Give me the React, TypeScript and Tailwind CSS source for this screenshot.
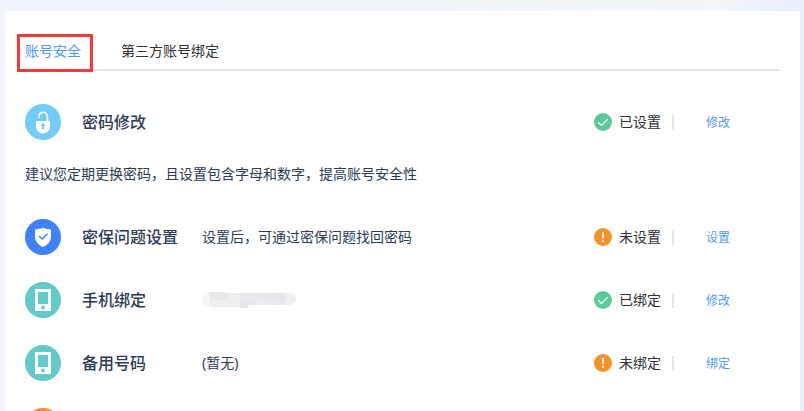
import { useState } from 'react';
import { clsx } from 'clsx';

type IconName = 'lock' | 'shield' | 'phone' | 'mail';

interface SecurityItem {
  id: string;
  icon: IconName;
  title?: string;
  detail?: string;
  masked?: boolean;
  hint?: string;
  done?: boolean;
  status?: string;
  action?: string;
}

const tabs = ['账号安全', '第三方账号绑定'];

const items: SecurityItem[] = [
  {
    id: 'password',
    icon: 'lock',
    title: '密码修改',
    hint: '建议您定期更换密码，且设置包含字母和数字，提高账号安全性',
    done: true,
    status: '已设置',
    action: '修改',
  },
  {
    id: 'question',
    icon: 'shield',
    title: '密保问题设置',
    detail: '设置后，可通过密保问题找回密码',
    done: false,
    status: '未设置',
    action: '设置',
  },
  { id: 'phone', icon: 'phone', title: '手机绑定', masked: true, done: true, status: '已绑定', action: '修改' },
  { id: 'backup', icon: 'phone', title: '备用号码', detail: '(暂无)', done: false, status: '未绑定', action: '绑定' },
  { id: 'mail', icon: 'mail' },
];

function ItemIcon({ name }: { name: IconName }) {
  return (
    <svg viewBox="0 0 36 36" className="size-9 shrink-0" aria-hidden="true">
      {name === 'lock' && (
        <>
          <circle cx="18" cy="18" r="18" fill="#73cbf8" />
          <path d="M14 13v-.5a4.200 4.200 0 0 1 8.400 0V18" fill="none" stroke="#fff" strokeWidth="1.800" strokeLinecap="round" />
          <path d="M11 17h14v5.500a7 7 0 0 1-14 0z" fill="#fff" />
          <path d="M18 19.300a1.900 1.900 0 0 1 .9 3.500v2.400h-1.800v-2.400a1.900 1.900 0 0 1 .9-3.500z" fill="#73cbf8" />
        </>
      )}
      {name === 'shield' && (
        <>
          <circle cx="18" cy="18" r="18" fill="#3e82fb" />
          <path d="M18 8.500C19.500 10 22 10 25 10.200L26 11V17.500C26 22.500 22.500 26 18 28C13.500 26 10 22.500 10 17.500V11L11 10.200C14 10 16.500 10 18 8.500Z" fill="#fff" />
          <path d="M14 17l3.200 3 5.300-5.300" fill="none" stroke="#3e82fb" strokeWidth="1.500" />
        </>
      )}
      {name === 'phone' && (
        <>
          <circle cx="18" cy="18" r="18" fill="#60cbc9" />
          <rect x="10" y="7" width="16" height="22" rx="0.5" fill="#fff" />
          <rect x="13" y="10" width="10" height="12" fill="#60cbc9" />
          <circle cx="18" cy="25.5" r="1.9" fill="#60cbc9" />
        </>
      )}
      {name === 'mail' && (
        <>
          <circle cx="18" cy="18" r="18" fill="#f59329" />
          <path d="M9 12h18v12H9z" fill="#fff" />
          <path d="M9 12l9 7 9-7" fill="none" stroke="#f59329" strokeWidth="1.5" />
        </>
      )}
    </svg>
  );
}

function StatusIcon({ done }: { done?: boolean }) {
  return (
    <svg viewBox="0 0 18 18" className="size-[18px] shrink-0" aria-hidden="true">
      <circle cx="9" cy="9" r="9" fill={done ? '#5cc99a' : '#f59329'} />
      {done ? (
        <path d="M4.2 9.200l3.300 3.200 6.300-6.300" fill="none" stroke="#fff" strokeWidth="1.2" />
      ) : (
        <>
          <path d="M8 4h2l-.3 6.500H8.300z" fill="#fff" />
          <rect x="8" y="12" width="2" height="2" fill="#fff" />
        </>
      )}
    </svg>
  );
}

// Mosaic drawn in place of the bound phone number
function MaskedNumber() {
  return (
    <svg viewBox="0 0 94 17" className="h-[17px] w-[94px]" role="img" aria-label="手机号已隐藏">
      <path d="M8 0H4Q0 3 0 8q0 5 3 7h5z" fill="#f5f5f6" />
      <path d="M8 0h13l1 1h4v7H8z" fill="#e8e8ea" />
      <path d="M8 8h30v7H8z" fill="#eeeef0" />
      <path d="M26 1h12v7H26z" fill="#ededef" />
      <path d="M38 1h15v7H38z" fill="#e9e9ed" />
      <path d="M38 8h15v5h-7v3h-8z" fill="#e6e6e9" />
      <path d="M53 1h15v7H53z" fill="#e8e8ec" />
      <path d="M53 8h15v5H53z" fill="#ebebee" />
      <path d="M68 1h15v7H68z" fill="#e5e5ea" />
      <path d="M68 8h15v5H68z" fill="#e9e9ed" />
      <path d="M83 1h6q5 2 5 6t-5 6h-6z" fill="#f0f0f3" />
    </svg>
  );
}

function SecurityRow({ item }: { item: SecurityItem }) {
  return (
    <li>
      <div className="flex h-9 items-center">
        <ItemIcon name={item.icon} />
        {item.title && (
          <>
            <h2 className="ml-[21px] w-[120px] shrink-0 text-base font-medium">{item.title}</h2>
            <div className="min-w-0 flex-1 text-sm">{item.masked ? <MaskedNumber /> : item.detail}</div>
            <StatusIcon done={item.done} />
            <span className="ml-[7px] text-sm text-[#303133]">{item.status}</span>
            <span className="ml-[11px] h-[15px] w-0.5 bg-[#e6e4e6]" />
            <button type="button" className="mr-[50px] ml-8 cursor-pointer pt-0.5 text-xs text-[#5199fa]">
              {item.action}
            </button>
          </>
        )}
      </div>
      {item.hint && <p className="mt-6 mb-2 text-sm leading-5">{item.hint}</p>}
    </li>
  );
}

export default function App() {
  const [activeTab, setActiveTab] = useState(tabs[0]);

  return (
    <div className="h-screen overflow-hidden bg-linear-to-r from-[#f1f5fb] via-[#f2f7fb] via-90% to-[#e8eefa] pt-[11px] pr-1 pl-[5px] font-['Noto_Sans','Noto_Sans_CJK_SC',sans-serif] text-[#2d3a55]">
      <main className="min-h-full bg-white px-5 pt-[23px]">
        <nav className="-ml-2 flex">
          {tabs.map((tab) => (
            <button
              key={tab}
              type="button"
              onClick={() => setActiveTab(tab)}
              className={clsx(
                'h-[38px] cursor-pointer pb-1 text-sm',
                tab === activeTab
                  ? 'relative mr-5 border-3 border-[#fb3838] bg-white pr-[9px] pl-[5px] text-[#5199fa]'
                  : 'px-2 text-[#303133]'
              )}
            >
              {tab}
            </button>
          ))}
        </nav>
        <div className="-mt-[3px] h-0.5 bg-[#e3e6eb]" />
        <ul className="mt-[33px] flex flex-col gap-[27px]">
          {items.map((item) => (
            <SecurityRow key={item.id} item={item} />
          ))}
        </ul>
      </main>
    </div>
  );
}
